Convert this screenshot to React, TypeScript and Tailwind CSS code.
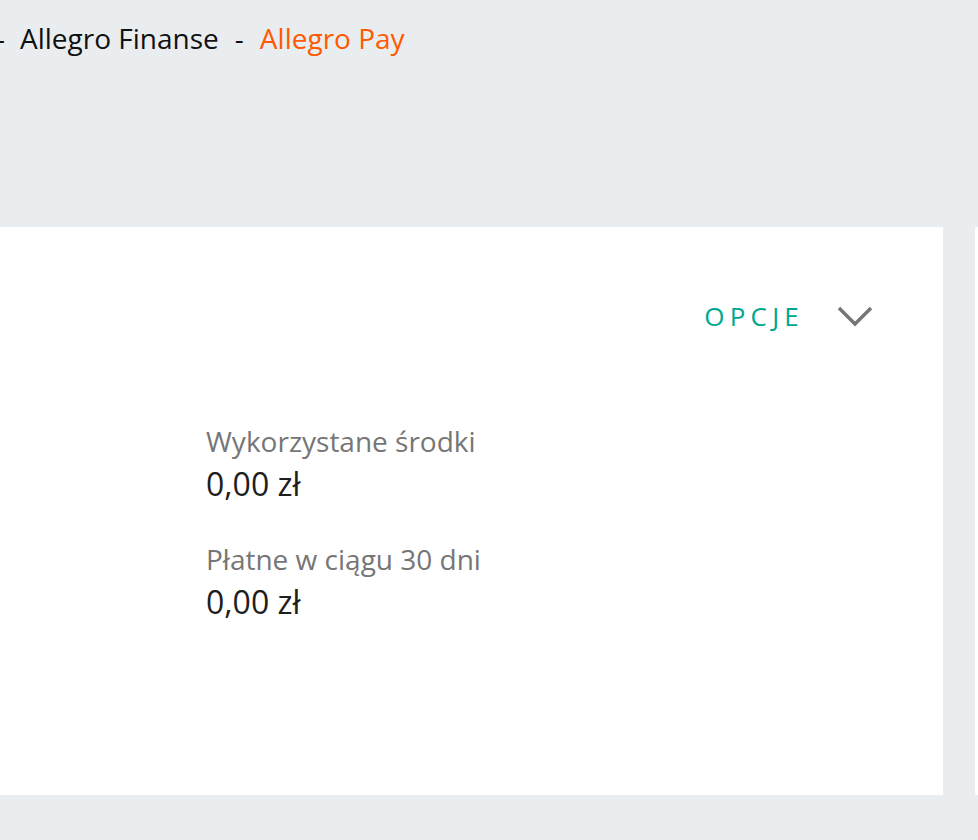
import React from "react";

const font = { fontFamily: '"Open Sans", "Noto Sans", sans-serif' };

function Stat({ label, value }: { label: string; value: string }) {
  return (
    <div className="flex flex-col">
      <span className="text-[28px] leading-[36px] text-[#767676]">{label}</span>
      <span className="text-[32px] leading-[50px] text-[#1e1e1e]">{value}</span>
    </div>
  );
}

export default function App() {
  return (
    <div className="w-[978px] h-[840px] overflow-hidden bg-[#eaedf0]" style={font}>
      {/* breadcrumb */}
      <div className="flex items-center h-[76px] ml-[-4px] text-[28px] text-[#111111] whitespace-nowrap">
        <span>-</span>
        <span className="ml-[15px]">Allegro Finanse</span>
        <span className="mx-[16px]">-</span>
        <span className="text-[#ff5a00]">Allegro Pay</span>
      </div>

      <div className="flex mt-[151px] gap-[32px]">
        <div className="w-[943px] h-[568px] bg-white shrink-0 flex flex-col">
          <div className="flex items-center justify-end h-[38px] mt-[70px] pr-[70px]">
            <span className="text-[26px] tracking-[0.2em] text-[#00a790]">OPCJE</span>
            <svg className="ml-[33px]" width="36" height="22" viewBox="0 0 36 22" fill="none">
              <path d="M2 3 L18 19 L34 3" stroke="#767676" strokeWidth="3.5" />
            </svg>
          </div>
          <div className="flex flex-col gap-[32px] pl-[206px] mt-[88px]">
            <Stat label="Wykorzystane środki" value="0,00 zł" />
            <Stat label="Płatne w ciągu 30 dni" value="0,00 zł" />
          </div>
        </div>
        <div className="w-[300px] h-[568px] bg-white shrink-0" />
      </div>
    </div>
  );
}
